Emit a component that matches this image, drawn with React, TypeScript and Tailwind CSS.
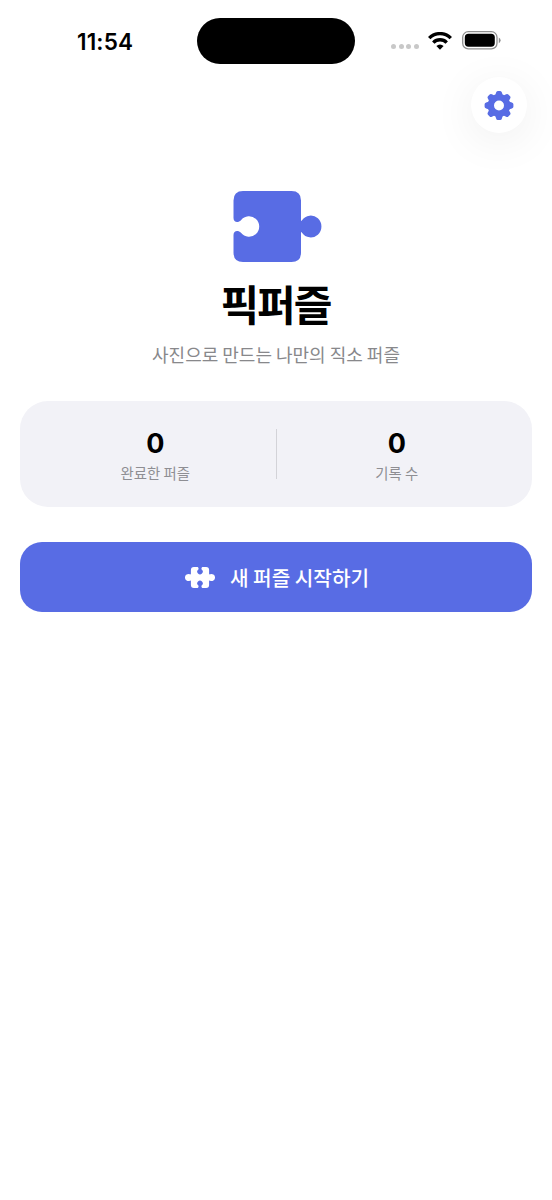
import React from "react";

interface StatItemProps {
  value: number;
  label: string;
}

const GearIcon: React.FC<{ className?: string }> = ({ className }) => (
  <svg viewBox="-15 -15.5 30 30" fill="currentColor" className={className}>
    <circle r="8.2" fill="none" stroke="currentColor" strokeWidth="6.4" />
    {[0, 45, 90, 135, 180, 225, 270, 315].map((angle) => (
      <path
        key={angle}
        transform={`rotate(${angle})`}
        d="M-3.9 -9.8L-2.9 -12.9Q-2.5 -14.4 -1.2 -14.4H1.2Q2.5 -14.4 2.9 -12.9L3.9 -9.8Z"
      />
    ))}
  </svg>
);

const PuzzlePieceIcon: React.FC<{ className?: string }> = ({ className }) => (
  <svg viewBox="0 0 89 72" fill="currentColor" className={className}>
    <path d="M10 1H58.5Q68 1 68 10.5V30.4C68 31.2 68.4 30.9 69 30.2A10.7 10.9 0 1 1 69 42.8C68.4 42.1 68 41.8 68 42.6V62.5Q68 72 58.5 72H10Q0.5 72 0.5 62.5V45C0.5 40.6 5 39.8 8 42.8A10.2 10.2 0 1 0 8 30.2C5 33.2 0.5 32.4 0.5 28V10.5Q0.5 1 10 1Z" />
  </svg>
);

const PuzzleConnectIcon: React.FC<{ className?: string }> = ({ className }) => (
  <svg viewBox="0 0 30 21" fill="currentColor" className={className}>
    <path d="M8.9 0H12C13.4 0 13.8 1.2 13.4 2.4A2.7 2.7 0 1 0 16.6 2.4C16.2 1.2 16.6 0 18 0H21.1Q24.1 0 24.1 3V6.8C24.1 7.5 24.6 7.5 25.1 7.3A3.5 3.5 0 1 1 25.1 13.7C24.6 13.5 24.1 13.5 24.1 14.2V18Q24.1 21 21.1 21H18C16.6 21 16.2 19.8 16.6 18.6A2.7 2.7 0 1 0 13.4 18.6C13.8 19.8 13.4 21 12 21H8.9Q5.9 21 5.9 18V14.2C5.9 13.5 5.4 13.5 4.9 13.7A3.5 3.5 0 1 1 4.9 7.3C5.4 7.5 5.9 7.5 5.9 6.8V3Q5.9 0 8.9 0Z" />
  </svg>
);

const WifiIcon: React.FC<{ className?: string }> = ({ className }) => (
  <svg viewBox="0 0 24 18" className={className}>
    <g fill="none" stroke="currentColor" strokeWidth="3.4">
      <path d="M1.2 6.1A15.2 15.2 0 0 1 22.8 6.1" />
      <path d="M5.3 10.6A9.4 9.4 0 0 1 18.7 10.6" />
    </g>
    <path d="M8.4 14A5 5 0 0 1 15.6 14L12 17.8Z" fill="currentColor" />
  </svg>
);

const BatteryIcon: React.FC<{ className?: string }> = ({ className }) => (
  <svg viewBox="0 0 39 19" className={className}>
    <rect x="0.7" y="0.7" width="34.3" height="17.2" rx="5.6" fill="none" stroke="#8e8e8e" strokeWidth="1.3" />
    <rect x="2.8" y="2.8" width="30" height="13" rx="3.7" fill="#000" />
    <path d="M36.8 6.4Q38.6 7.3 38.6 9.3T36.8 12.2Z" fill="#8e8e8e" />
  </svg>
);

const StatusBar: React.FC = () => (
  <div className="flex h-[64px] items-center pt-[17px]">
    <div className="w-[197px] pl-[77px] pt-[2px] font-['Inter'] text-[22.5px] font-semibold leading-[46px] tracking-[0.15px]">
      11:54
    </div>
    <div className="h-[46px] w-[158px] rounded-full bg-black" />
    <div className="flex items-center pl-[36px]">
      <div className="mt-[11px] flex gap-[2.5px]">
        {[0, 1, 2, 3].map((dot) => (
          <span key={dot} className="size-[5px] rounded-full bg-[#c8c8c8]" />
        ))}
      </div>
      <WifiIcon className="ml-[9px] h-[18px] w-[24px]" />
      <BatteryIcon className="ml-[10px] h-[19px] w-[39px]" />
    </div>
  </div>
);

const StatItem: React.FC<StatItemProps> = ({ value, label }) => (
  <div className="flex flex-1 flex-col items-center pt-[2px]">
    <span className="font-['Inter'] text-[27px] font-bold leading-[34px]">{value}</span>
    <span className="mt-[2px] text-[14.4px] leading-[20px] text-[#8e8e93]">{label}</span>
  </div>
);

const App: React.FC = () => {
  return (
    <div className="h-[1200px] w-[552px] overflow-hidden bg-white font-['Noto_Sans_CJK_KR',sans-serif] text-black">
      <StatusBar />

      {/* Settings */}
      <div className="flex justify-end pr-[25px] pt-[13px]">
        <button
          type="button"
          aria-label="설정"
          className="flex size-[56px] items-center justify-center rounded-full bg-white text-[#586ce4] shadow-[0_8px_45px_rgba(0,0,0,0.07)]"
        >
          <GearIcon className="size-[30px]" />
        </button>
      </div>

      {/* Header */}
      <header className="flex flex-col items-center pt-[57px]">
        <PuzzlePieceIcon className="ml-[3px] h-[72px] w-[89px] text-[#586ce4]" />
        <h1 className="mt-[11px] pr-[1px] text-[42px] font-bold leading-[60px] tracking-[-1.9px]">픽퍼즐</h1>
        <p className="mt-[8px] text-[18px] leading-[26px] text-[#88888b]">사진으로 만드는 나만의 직소 퍼즐</p>
      </header>

      <main className="px-[20px] pt-[34px]">
        {/* Stats */}
        <section className="flex h-[106px] items-center rounded-[28px] bg-[#f2f2f7] px-[15px]">
          <StatItem value={0} label="완료한 퍼즐" />
          <div className="h-[50px] w-px bg-[#d3d3d8]" />
          <StatItem value={0} label="기록 수" />
        </section>

        <button
          type="button"
          className="mt-[35px] flex h-[70px] w-full items-center justify-center gap-[15px] rounded-[22px] bg-[#586ce4] pl-[2px] text-[20.2px] font-medium text-white"
        >
          <PuzzleConnectIcon className="h-[21px] w-[30px]" />
          <span className="pt-[2px]">새 퍼즐 시작하기</span>
        </button>
      </main>
    </div>
  );
};

export default App;
